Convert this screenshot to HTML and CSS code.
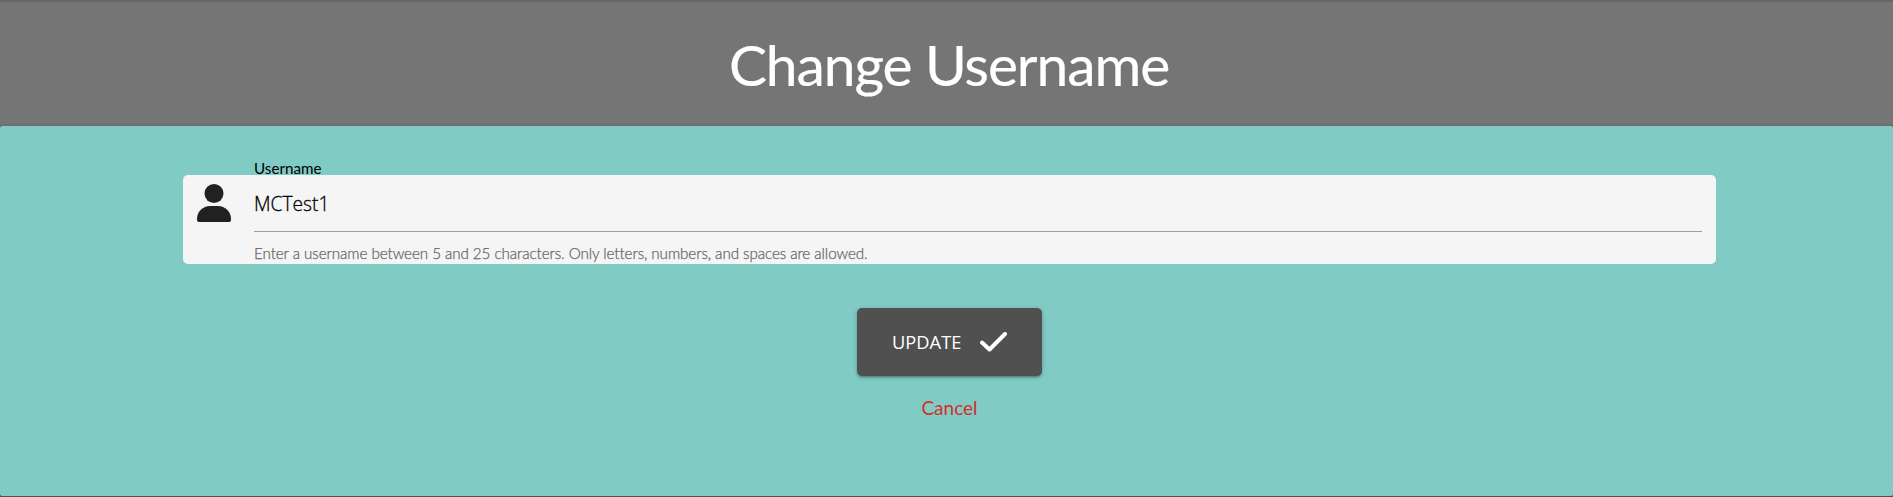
FILE: index.html
```html
<!DOCTYPE html>
<html lang="en">
<head>
<meta charset="utf-8">
<title>Change Username</title>
<link rel="stylesheet" href="styles.css">
</head>
<body>
<header class="page-header"><h1 class="title"><span>Change Username</span></h1></header>
<main class="card-panel">
  <form class="form">
    <div class="field">
      <svg class="user-icon" viewBox="0 0 34 38" aria-hidden="true"><circle cx="17" cy="9.5" r="9.5"/><path d="M13 22h8a13 13 0 0 1 13 13v1a2 2 0 0 1-2 2H2a2 2 0 0 1-2-2v-1a13 13 0 0 1 13-13z"/></svg>
      <div class="control">
        <label class="label" for="username"><span class="text-label">Username</span></label>
        <input class="input" id="username" type="text" value="MCTest1">
        <div class="helper"><span class="text-helper">Enter a username between 5 and 25 characters. Only letters, numbers, and spaces are allowed.</span></div>
      </div>
    </div>
    <button class="update" type="button"><span class="text-update">UPDATE</span><svg class="check" viewBox="0 0 27 20" aria-hidden="true"><path d="M2 10.5l7.5 7L25 2"/></svg></button>
    <a class="cancel" href="#">Cancel</a>
  </form>
</main>
</body>
</html>
```
FILE: styles.css
```css
* { box-sizing: border-box; }
body { margin: 0; height: 497px; overflow: hidden; background: #505050; font-family: Lato, sans-serif; }
.page-header { height: 126px; background: linear-gradient(#606060, #757575 3px, #757575 123px, #6c6c6c); }
.title { margin: 0; padding: 33px 0 0 5px; font-size: 56.96px; line-height: 63px; font-weight: 400; letter-spacing: -1.1px; color: #fff; text-align: center; -webkit-text-stroke: .2px #fff; }
.card-panel { height: 370px; background: #80cbc4; border-radius: 2px; padding-top: 49px; }
.form { width: 1533px; margin: 0 auto 0 183px; display: flex; flex-direction: column; align-items: center; }
.field { display: flex; width: 100%; height: 89px; background: #f5f5f5; border-radius: 5px; padding: 0 14px; }
.user-icon { width: 34px; height: 38px; margin: 9px 23px 0 0; fill: #212121; flex: none; }
.control { flex: 1; }
.label { display: block; height: 18px; margin-top: -16px; font-size: 15.2px; line-height: 18px; color: #000; white-space: nowrap; }
.input { display: block; width: 100%; height: 55px; padding: 0 0 1px; border: 0; border-bottom: 1px solid #9e9e9e; background: transparent; font: 300 19.2px "Open Sans", sans-serif; color: #000; outline: none; -webkit-text-stroke: .3px #000; }
.helper { padding-top: 12px; font-size: 15.2px; line-height: 18px; font-weight: 300; letter-spacing: -.07px; color: #666; white-space: nowrap; -webkit-text-stroke: .25px; }
.update { display: flex; align-items: center; width: 185px; height: 68px; margin-top: 44px; padding: 0 35px; border: 0; border-radius: 5px; background: #505050; color: #fff; font: 400 18.3px "Open Sans", sans-serif; box-shadow: 0 2px 2px rgba(0,0,0,.14), 0 3px 1px -2px rgba(0,0,0,.12), 0 1px 5px rgba(0,0,0,.2); }
.text-update { padding-bottom: 2px; }
.check { width: 27px; height: 20px; margin-left: auto; fill: none; stroke: #fff; stroke-width: 4; stroke-linecap: round; stroke-linejoin: round; }
.cancel { margin-top: 20px; font-size: 19px; line-height: 23px; color: #d32f2f; text-decoration: none; }
```
